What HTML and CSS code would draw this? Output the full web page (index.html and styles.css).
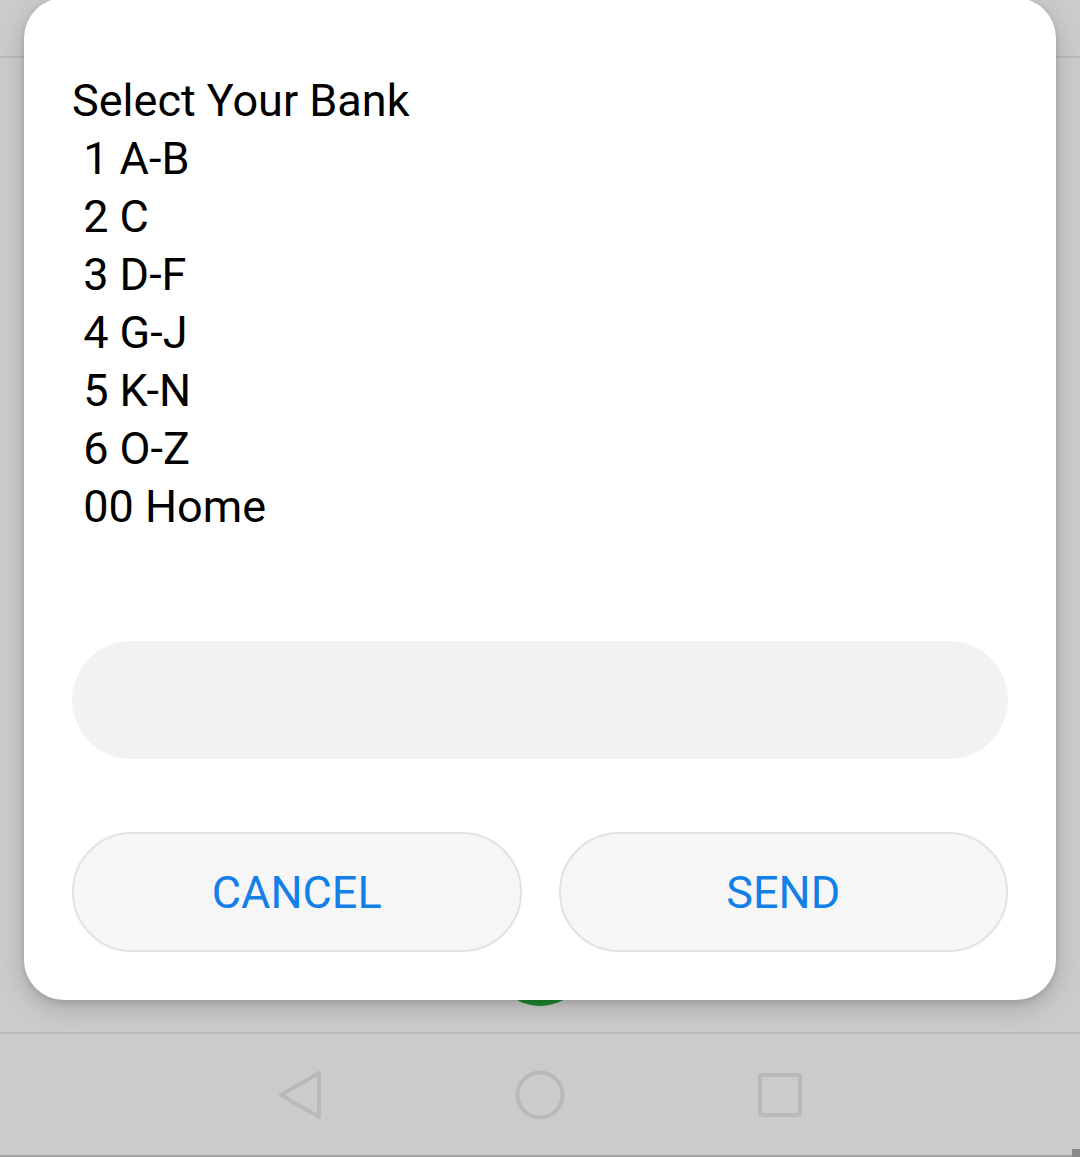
FILE: index.html
```html
<!DOCTYPE html>
<html lang="en">
<head>
    <meta charset="UTF-8">
    <meta name="viewport" content="width=device-width, initial-scale=1.0">
    <title>Select Your Bank</title>
    <link rel="stylesheet" href="styles.css">
</head>
<body>
    <div class="screen">
        <div class="app">
            <div class="appbar"></div>
            <div class="fab"></div>

            <div class="dialog">
                <div class="message">Select Your Bank
 1 A-B
 2 C
 3 D-F
 4 G-J
 5 K-N
 6 O-Z
 00 Home</div>
                <input class="reply" type="text">
                <div class="actions">
                    <button class="btn">CANCEL</button>
                    <button class="btn">SEND</button>
                </div>
            </div>
        </div>

        <div class="navbar">
            <div class="nav-cell">
                <svg width="46" height="50" viewBox="0 0 46 50">
                    <path d="M42 3 L42 47 L4 25 Z" fill="none" stroke="#b9b9b9" stroke-width="4" stroke-linejoin="round"/>
                </svg>
            </div>
            <div class="nav-cell">
                <svg width="52" height="52" viewBox="0 0 52 52">
                    <circle cx="26" cy="26" r="22.5" fill="none" stroke="#b9b9b9" stroke-width="4"/>
                </svg>
            </div>
            <div class="nav-cell">
                <svg width="46" height="46" viewBox="0 0 46 46">
                    <rect x="3" y="3" width="40" height="40" rx="2" fill="none" stroke="#b9b9b9" stroke-width="4"/>
                </svg>
            </div>
        </div>
        <div class="corner"></div>
    </div>
</body>
</html>
```

FILE: styles.css
```css
body {
    margin: 0;
    padding: 0;
    background-color: #cbcbcb;
    font-family: Roboto, "Noto Sans", sans-serif;
}
.screen {
    width: 1080px;
    height: 1157px;
    display: flex;
    flex-direction: column;
    position: relative;
    overflow: hidden;
}
.app {
    flex: 1;
    position: relative;
}
.appbar {
    height: 56px;
    border-bottom: 2px solid #bababa;
}
.fab {
    position: absolute;
    left: 492px;
    top: 910px;
    width: 96px;
    height: 96px;
    border-radius: 50%;
    background-color: #1f8b31;
}
.dialog {
    position: absolute;
    left: 24px;
    top: -2px;
    width: 1032px;
    height: 1002px;
    box-sizing: border-box;
    padding: 74px 48px 48px;
    background-color: #fff;
    border-radius: 40px;
    box-shadow: 0 8px 24px rgba(0, 0, 0, 0.18), 0 2px 6px rgba(0, 0, 0, 0.12);
    display: flex;
    flex-direction: column;
}
.message {
    white-space: pre;
    font-size: 45px;
    line-height: 58px;
    color: #000;
}
.reply {
    display: block;
    margin-top: 105px;
    height: 120px;
    border: none;
    border-radius: 60px;
    background-color: #f2f2f2;
    outline: none;
    padding: 0 40px;
    font-family: inherit;
    font-size: 42px;
}
.actions {
    display: flex;
    gap: 37px;
    margin-top: 73px;
}
.btn {
    flex: 1;
    height: 120px;
    border: 2px solid #e2e2e2;
    border-radius: 60px;
    background-color: #f6f6f6;
    color: #1380e8;
    font-family: inherit;
    font-size: 45px;
}
.navbar {
    height: 121px;
    border-top: 2px solid #bbbbbb;
    border-bottom: 2px solid #a3a3a3;
    display: flex;
    align-items: center;
    justify-content: center;
}
.nav-cell {
    width: 240px;
    display: flex;
    justify-content: center;
}
.corner {
    position: absolute;
    right: 0;
    bottom: 0;
    width: 8px;
    height: 8px;
    background-color: #8a8a8a;
}
```
